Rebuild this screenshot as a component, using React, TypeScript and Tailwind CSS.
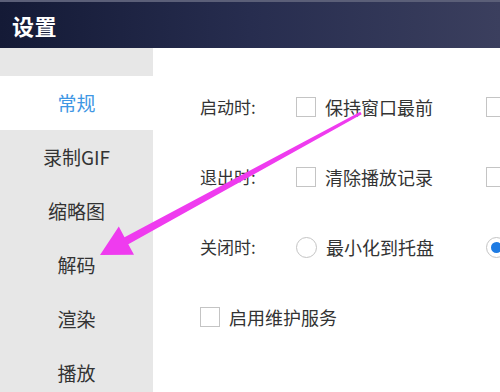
import React from "react";

const font = { fontFamily: '"Noto Sans CJK SC", "Microsoft YaHei", sans-serif' };

const navList = ["常规", "录制GIF", "缩略图", "解码", "渲染", "播放"];

function Checkbox() {
  return <div className="w-5 h-5 shrink-0 border border-[#c4c4c4] bg-white" />;
}

function Radio({ checked }: { checked?: boolean }) {
  return (
    <div className="w-[21px] h-[21px] shrink-0 rounded-full border border-[#c4c4c4] bg-white flex items-center justify-center">
      {checked && <div className="w-[11px] h-[11px] rounded-full bg-[#1e7be3]" />}
    </div>
  );
}

function Option({ children, radio, checked }: { children?: React.ReactNode; radio?: boolean; checked?: boolean }) {
  return (
    <div className="w-[190px] shrink-0 flex items-center gap-[9px]">
      {radio ? <Radio checked={checked} /> : <Checkbox />}
      {children && <span className="text-[18px] text-[#333] whitespace-nowrap">{children}</span>}
    </div>
  );
}

function Row({ label, children }: { label: string; children: React.ReactNode }) {
  return (
    <div className="h-[70px] flex items-center">
      <span className="w-[96px] shrink-0 text-[17px] text-[#333]">{label}</span>
      {children}
    </div>
  );
}

export default function App() {
  return (
    <div className="relative w-[500px] h-[392px] overflow-hidden bg-white" style={font}>
      <div className="h-[48px] border-t-2 border-[#5b5f78] bg-gradient-to-r from-[#141a36] via-[#272d4f] to-[#3b3f5e] flex items-center px-3">
        <span className="text-white text-[22px] font-bold tracking-wide">设置</span>
      </div>
      <div className="flex h-[344px]">
        <div className="w-[153px] shrink-0 bg-[#e7e7e7] pt-[28px]">
          {navList.map((item, i) => (
            <div
              key={item}
              className={`h-[54px] flex items-center justify-center text-[19px] ${
                i === 0 ? "bg-white text-[#3f97e4]" : "text-[#333]"
              }`}
            >
              {item}
            </div>
          ))}
        </div>
        <div className="flex-1 pl-[47px] pt-[24px] overflow-hidden">
          <Row label="启动时:">
            <Option>保持窗口最前</Option>
            <Option />
          </Row>
          <Row label="退出时:">
            <Option>清除播放记录</Option>
            <Option />
          </Row>
          <Row label="关闭时:">
            <Option radio>最小化到托盘</Option>
            <Option radio checked />
          </Row>
          <div className="h-[70px] flex items-center">
            <Option>启用维护服务</Option>
          </div>
        </div>
      </div>
      <svg className="absolute inset-0 pointer-events-none" width="500" height="392" viewBox="0 0 500 392">
        <polygon
          points="360.3,111.7 361.7,114.3 128.3,244.2 134,254.8 100,255 118.8,226.6 124.5,237.2"
          fill="#ef3bef"
        />
      </svg>
    </div>
  );
}
